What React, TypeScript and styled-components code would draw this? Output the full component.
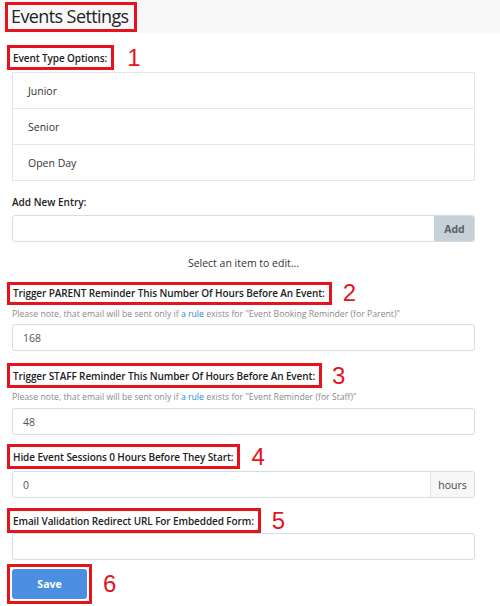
import React from "react";
import styled, { createGlobalStyle } from "styled-components";

const Global = createGlobalStyle`
  html, body { margin: 0; padding: 0; background: #fff; }
  body { font-family: "Open Sans", "Noto Sans", Arial, sans-serif; color: #222; }
  * { box-sizing: border-box; }
`;

const RED = "#e3141c";

const Page = styled.div`
  width: 500px;
  height: 606px;
  overflow: hidden;
`;

const Header = styled.div`
  background: #f8f8f8;
  height: 33px;
  padding: 2px 0 0 5px;
`;

const TitleBox = styled.div`
  display: inline-block;
  border: 3px solid ${RED};
  height: 30px;
  padding: 0 5px 0 3px;
  font-size: 18px;
  letter-spacing: -0.6px;
  line-height: 23px;
  color: #222;
`;

const Body = styled.div`
  padding: 0 25px 0 12px;
`;

const AnnotRow = styled.div<{ $top: number }>`
  display: flex;
  align-items: center;
  margin-top: ${(p) => p.$top}px;
  margin-left: -5px;
`;

const LabelBox = styled.div<{ $h: number }>`
  border: 3px solid ${RED};
  height: ${(p) => p.$h}px;
  display: flex;
  align-items: center;
  padding: 0 4px 0 3px;
  font-size: 10px;
  letter-spacing: -0.1px;
  font-weight: 600;
  color: #222;
  white-space: nowrap;
`;

const Num = styled.span<{ $gap: number }>`
  margin-left: ${(p) => p.$gap}px;
  color: ${RED};
  font-family: "Liberation Sans", Arial, sans-serif;
  font-size: 24px;
  line-height: 24px;
`;

const List = styled.div`
  margin-top: 2px;
  border: 1px solid #e6e6e6;
`;

const ListItem = styled.div`
  height: 35px;
  display: flex;
  align-items: center;
  padding-left: 15px;
  font-size: 10.5px;
  color: #333;
  & + & { border-top: 1px solid #e6e6e6; height: 36px; }
`;

const PlainLabel = styled.div<{ $top: number }>`
  margin-top: ${(p) => p.$top}px;
  font-size: 10px;
  font-weight: 600;
  color: #222;
  line-height: 14px;
`;

const Group = styled.div<{ $top: number }>`
  margin-top: ${(p) => p.$top}px;
  display: flex;
  height: 27px;
  border: 1px solid #d4dde4;
  border-radius: 3px;
  overflow: hidden;
`;

const Field = styled.div`
  flex: 1;
  display: flex;
  align-items: center;
  padding-left: 10px;
  font-size: 10.5px;
  color: #555;
`;

const AddBtn = styled.div`
  width: 40px;
  background: #c6d0d8;
  border-left: 1px solid #c6d0d8;
  display: flex;
  align-items: center;
  justify-content: center;
  font-size: 10.5px;
  font-weight: 700;
  color: #5b6168;
`;

const Addon = styled.div`
  width: 44px;
  background: #f7f7f7;
  border-left: 1px solid #dde3e8;
  display: flex;
  align-items: center;
  justify-content: center;
  font-size: 10.5px;
  color: #444;
`;

const Center = styled.div`
  margin-top: 14px;
  text-align: center;
  font-size: 10.5px;
  color: #333;
  line-height: 14px;
`;

const Help = styled.div`
  margin-top: 3px;
  font-size: 8.7px;
  color: #8a8a8a;
  line-height: 12px;
  a { color: #2a8ad4; text-decoration: none; }
`;

const SaveRow = styled.div`
  display: flex;
  align-items: center;
  margin-top: 4px;
  margin-left: -5px;
`;

const SaveBox = styled.div`
  border: 3px solid ${RED};
  padding: 2px 2px;
`;

const SaveBtn = styled.button`
  width: 75px;
  height: 30px;
  border: none;
  border-radius: 3px;
  background: #4a8fe2;
  color: #fff;
  font-family: inherit;
  font-size: 10.5px;
  font-weight: 700;
  display: block;
`;

export default function App() {
  return (
    <Page>
      <Global />
      <Header>
        <TitleBox>Events Settings</TitleBox>
      </Header>
      <Body>
        <AnnotRow $top={12}>
          <LabelBox $h={25}>Event Type Options:</LabelBox>
          <Num $gap={13}>1</Num>
        </AnnotRow>
        <List>
          <ListItem>Junior</ListItem>
          <ListItem>Senior</ListItem>
          <ListItem>Open Day</ListItem>
        </List>
        <PlainLabel $top={14}>Add New Entry:</PlainLabel>
        <Group $top={6}>
          <Field />
          <AddBtn>Add</AddBtn>
        </Group>
        <Center>Select an item to edit...</Center>
        <AnnotRow $top={11}>
          <LabelBox $h={23}>Trigger PARENT Reminder This Number Of Hours Before An Event:</LabelBox>
          <Num $gap={11}>2</Num>
        </AnnotRow>
        <Help>
          Please note, that email will be sent only if <a>a rule</a> exists for "Event Booking Reminder (for Parent)"
        </Help>
        <Group $top={4}>
          <Field>168</Field>
        </Group>
        <AnnotRow $top={12}>
          <LabelBox $h={25}>Trigger STAFF Reminder This Number Of Hours Before An Event:</LabelBox>
          <Num $gap={10}>3</Num>
        </AnnotRow>
        <Help>
          Please note, that email will be sent only if <a>a rule</a> exists for "Event Reminder (for Staff)"
        </Help>
        <Group $top={5}>
          <Field>48</Field>
        </Group>
        <AnnotRow $top={9}>
          <LabelBox $h={25}>Hide Event Sessions 0 Hours Before They Start:</LabelBox>
          <Num $gap={11}>4</Num>
        </AnnotRow>
        <Group $top={2}>
          <Field>0</Field>
          <Addon>hours</Addon>
        </Group>
        <AnnotRow $top={10}>
          <LabelBox $h={25}>Email Validation Redirect URL For Embedded Form:</LabelBox>
          <Num $gap={11}>5</Num>
        </AnnotRow>
        <Group $top={0}>
          <Field />
        </Group>
        <SaveRow>
          <SaveBox>
            <SaveBtn>Save</SaveBtn>
          </SaveBox>
          <Num $gap={11}>6</Num>
        </SaveRow>
      </Body>
    </Page>
  );
}
